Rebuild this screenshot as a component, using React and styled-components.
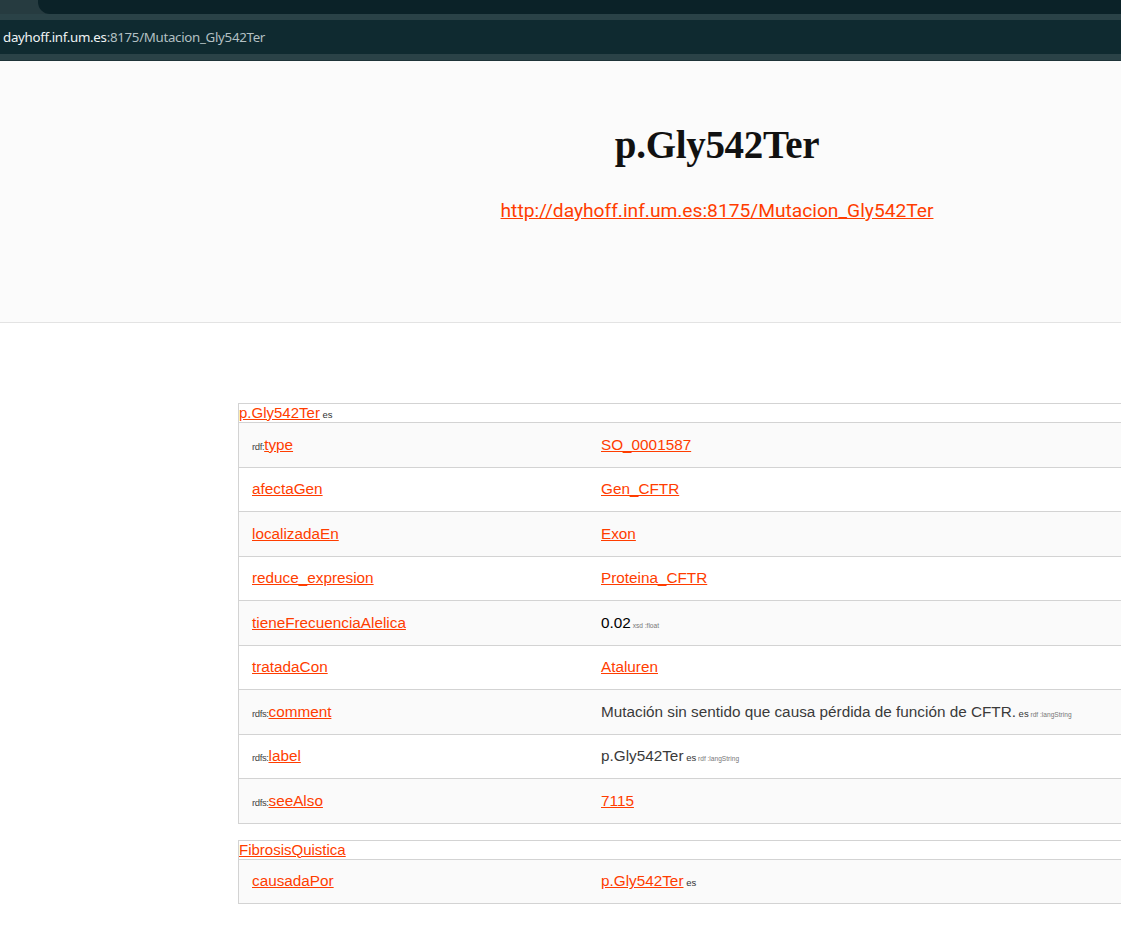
import React from "react";
import styled, { createGlobalStyle } from "styled-components";

const GlobalStyle = createGlobalStyle`
  html, body {
    margin: 0;
    padding: 0;
    background: #ffffff;
    overflow: hidden;
  }
`;

const triples = [
  { prefix: "rdf:", pred: "type", obj: { link: "SO_0001587" } },
  { pred: "afectaGen", obj: { link: "Gen_CFTR" } },
  { pred: "localizadaEn", obj: { link: "Exon" } },
  { pred: "reduce_expresion", obj: { link: "Proteina_CFTR" } },
  { pred: "tieneFrecuenciaAlelica", obj: { text: "0.02", dark: true, type: "xsd :float" } },
  { pred: "tratadaCon", obj: { link: "Ataluren" } },
  {
    prefix: "rdfs:",
    pred: "comment",
    obj: { text: "Mutación sin sentido que causa pérdida de función de CFTR.", lang: "es", type: "rdf :langString" },
  },
  { prefix: "rdfs:", pred: "label", obj: { text: "p.Gly542Ter", lang: "es", type: "rdf :langString" } },
  { prefix: "rdfs:", pred: "seeAlso", obj: { link: "7115" } },
];

const incoming = [{ pred: "causadaPor", obj: { link: "p.Gly542Ter", lang: "es" } }];

const Objeto = ({ obj }) => (
  <>
    {obj.link ? <Enlace href="#">{obj.link}</Enlace> : <Literal $dark={obj.dark}>{obj.text}</Literal>}
    {obj.lang && <Lang> {obj.lang}</Lang>}
    {obj.type && <Tipo> {obj.type}</Tipo>}
  </>
);

const Bloque = ({ sujeto, lang, filas }) => (
  <Tabla>
    <tbody>
      <tr>
        <Cabecera colSpan={2}>
          <Enlace href="#">{sujeto}</Enlace>
          {lang && <Lang> {lang}</Lang>}
        </Cabecera>
      </tr>
      {filas.map((f, i) => (
        <Fila key={f.pred} $par={i % 2 === 1}>
          <Celda $ancho>
            {f.prefix && <Prefijo>{f.prefix}</Prefijo>}
            <Enlace href="#">{f.pred}</Enlace>
          </Celda>
          <Celda>
            <Objeto obj={f.obj} />
          </Celda>
        </Fila>
      ))}
    </tbody>
  </Tabla>
);

const App = () => (
  <>
    <GlobalStyle />
    <Chrome>
      <TabStrip>
        <TabActiva />
      </TabStrip>
      <Franja />
      <Direccion>
        <Host>dayhoff.inf.um.es</Host>
        <Ruta>:8175/Mutacion_Gly542Ter</Ruta>
      </Direccion>
      <Franja />
    </Chrome>
    <Pagina>
      <Header>
        <Titulo>p.Gly542Ter</Titulo>
        <UriLink href="#">http://dayhoff.inf.um.es:8175/Mutacion_Gly542Ter</UriLink>
      </Header>
      <Main>
        <Bloque sujeto="p.Gly542Ter" lang="es" filas={triples} />
        <Bloque sujeto="FibrosisQuistica" filas={incoming} />
      </Main>
    </Pagina>
  </>
);

export default App;

const Chrome = styled.div`
  width: 1121px;
  background: #0f2a30;
`;

const TabStrip = styled.div`
  height: 14px;
  background: #263b40;
  padding-left: 38px;
  display: flex;
`;

const TabActiva = styled.div`
  flex: 1;
  background: #0b2228;
  border-bottom-left-radius: 12px;
`;

const Franja = styled.div`
  height: 6px;
  background: #2a4247;
`;

const Direccion = styled.div`
  height: 34px;
  display: flex;
  align-items: center;
  padding-left: 3px;
  font-family: "Noto Sans", "Open Sans", sans-serif;
  font-size: 13.3px;
  letter-spacing: -0.3px;
`;

const Host = styled.span`
  color: #eef3f4;
`;

const Ruta = styled.span`
  color: #b3c0c3;
`;

const Pagina = styled.div`
  width: 1434px;
  font-family: "Liberation Sans", Arial, sans-serif;
`;

const Header = styled.header`
  height: 263px;
  background: #fbfbfb;
  border-top: 1px solid #1e3338;
  border-bottom: 1px solid #e3e3e3;
  box-sizing: border-box;
  display: flex;
  flex-direction: column;
  align-items: center;
  padding-top: 56px;
`;

const Titulo = styled.h1`
  margin: 0;
  font-family: "Liberation Serif", "DejaVu Serif", serif;
  font-weight: bold;
  font-size: 39px;
  letter-spacing: -0.3px;
  line-height: 56px;
  color: #111;
`;

const UriLink = styled.a`
  margin-top: 26px;
  font-family: Roboto, "Liberation Sans", sans-serif;
  font-size: 19.2px;
  color: #ff3d00;
  text-decoration: underline;
`;

const Main = styled.main`
  padding: 80px 238px 40px;
  display: flex;
  flex-direction: column;
  gap: 16px;
`;

const Tabla = styled.table`
  width: 100%;
  border-collapse: collapse;
  border: 1px solid #d3d3d3;
`;

const Cabecera = styled.td`
  padding: 0;
  height: 18px;
  line-height: 18px;
  font-size: 15px;
  background: #ffffff;
  vertical-align: bottom;
`;

const Fila = styled.tr`
  background: ${(p) => (p.$par ? "#ffffff" : "#fafafa")};
  border-top: 1px solid #d3d3d3;
`;

const Celda = styled.td`
  height: 43.5px;
  padding: 0 13px;
  font-size: 15.3px;
  vertical-align: middle;
  width: ${(p) => (p.$ancho ? "323px" : "auto")};
`;

const Enlace = styled.a`
  color: #ff3d00;
  text-decoration: underline;
`;

const Literal = styled.span`
  color: ${(p) => (p.$dark ? "#000" : "#3a3a3a")};
`;

const Prefijo = styled.span`
  font-size: 9.5px;
  color: #444;
  letter-spacing: -0.4px;
`;

const Lang = styled.span`
  font-size: 9.5px;
  line-height: 1;
  color: #333;
`;

const Tipo = styled.span`
  font-size: 6.6px;
  color: #777;
`;
